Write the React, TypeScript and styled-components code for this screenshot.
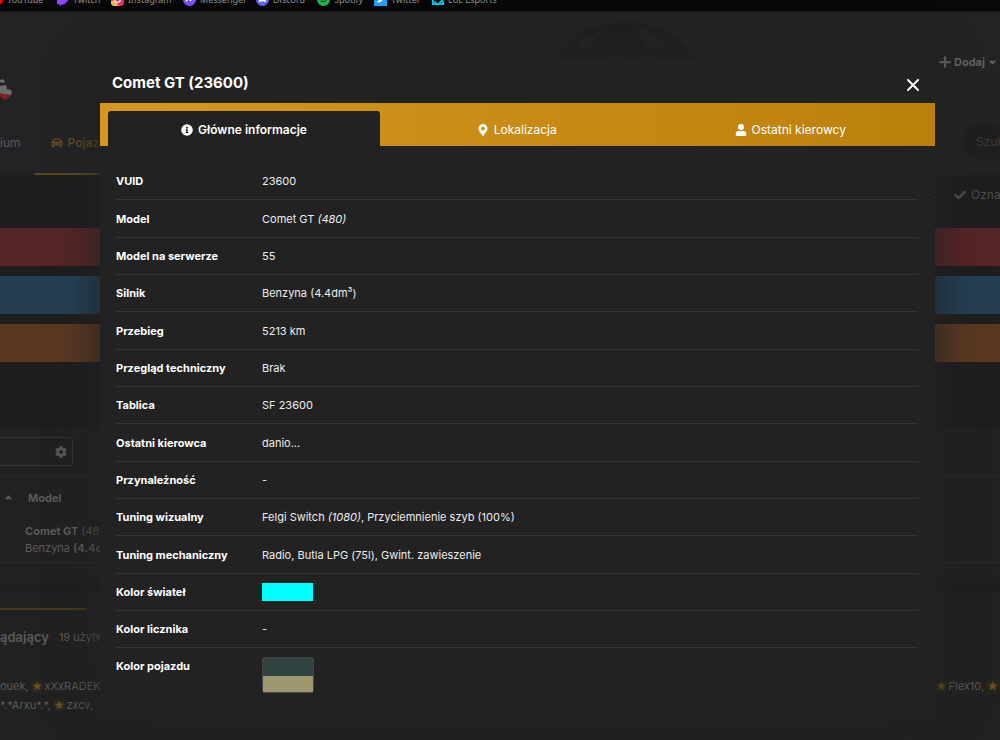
import React from 'react';
import styled, { createGlobalStyle } from 'styled-components';

const Global = createGlobalStyle`
  *, *::before, *::after { box-sizing: border-box; }
  html, body { margin: 0; padding: 0; }
  body {
    background: #212121;
    color: #5a5a5a;
    font-family: Inter, "Noto Sans", sans-serif;
    font-size: 12px;
    line-height: 18px;
  }
  button, input { font: inherit; color: inherit; }
  a { color: inherit; text-decoration: none; }
  svg { flex: none; }
`;

const Page = styled.div`
  position: relative;
  min-height: 100vh;
  overflow: hidden;
  white-space: nowrap;
`;

/* Bookmarks strip */

const Bookmarks = styled.nav`
  display: flex;
  align-items: flex-end;
  height: 12px;
  margin-left: -10px;
  overflow: hidden;
  background: #080808;
  border-bottom: 1px solid #161617;
  color: #8f8f8f;
  font: 9px/14px "Noto Sans", sans-serif;
`;

const Bookmark = styled.a<{ $width: number }>`
  display: flex;
  align-items: center;
  gap: 4px;
  flex: 0 0 ${p => p.$width}px;
  height: 23px;
`;

const BookmarkIcon = styled.svg`
  width: 13px;
  height: 13px;
`;

/* Page behind the dialog */

const Header = styled.header`
  position: relative;
  background: #232325;
`;

const HelmetArt = styled.svg`
  position: absolute;
  left: 550px;
  top: 8px;
  width: 150px;
  height: 44px;
`;

const Brand = styled.div`
  display: flex;
  justify-content: space-between;
  height: 100px;
  padding-top: 40px;
`;

const Logo = styled.svg`
  width: 14px;
  height: 24px;
  margin-top: 26px;
`;

const AddButton = styled.button`
  display: flex;
  align-items: center;
  align-self: flex-start;
  gap: 3px;
  height: 20px;
  padding: 0 3px 0 0;
  border: 0;
  background: none;
  color: #626262;
  font-size: 11px;
  font-weight: 700;
`;

const NavRow = styled.div`
  display: flex;
  justify-content: space-between;
  height: 63px;
`;

const NavLinks = styled.nav`
  display: flex;
  gap: 14px;
`;

const NavLink = styled.a<{ $active?: boolean }>`
  display: flex;
  align-items: center;
  gap: 5px;
  height: 63px;
  padding: ${p => (p.$active ? '0 16px' : '0')};
  border-bottom: 2px solid ${p => (p.$active ? '#5f4819' : 'transparent')};
  color: ${p => (p.$active ? '#5c4821' : '#5a5a5a')};
  font-weight: ${p => (p.$active ? 600 : 400)};
`;

const Search = styled.input`
  width: 37px;
  height: 35px;
  margin-top: 12px;
  padding: 0 0 0 13px;
  border: 0;
  border-radius: 18px 0 0 18px;
  background: #1f1f20;
  &::placeholder { color: #3a3a3b; opacity: 1; }
`;

const Actions = styled.div`
  display: flex;
  justify-content: flex-end;
  gap: 17px;
  height: 53px;
  padding-top: 10px;
  background: #1e1e1e;
  color: #4c4c4c;
`;

const ActionLink = styled.a`
  display: flex;
  align-items: center;
  gap: 5px;
  width: 46px;
  height: 20px;
  overflow: hidden;
`;

const Notices = styled.section`
  display: grid;
  gap: 10px;
  height: 201px;
  align-content: start;
  background: #1e1e1e;
`;

const Notice = styled.div<{ $color: string }>`
  height: 38px;
  background: ${p => p.$color};
`;

const Results = styled.section`
  border-bottom: 8px solid #1e1e1e;
`;

const FilterRow = styled.div`
  padding: 8px 0 10px;
`;

const Filter = styled.div`
  display: flex;
  align-items: center;
  width: 73px;
  height: 29px;
  padding-right: 5px;
  border: 1px solid #333;
  border-left: 0;
  border-radius: 0 3px 3px 0;
`;

const FilterInput = styled.input`
  min-width: 0;
  flex: 1;
  border: 0;
  background: none;
`;

const IconButton = styled.button`
  display: flex;
  padding: 0;
  border: 0;
  background: none;
  color: #595959;
`;

const ResultTable = styled.table`
  width: 100%;
  border-collapse: collapse;
  font-size: 11px;
  b { font-weight: 700; }
  th {
    height: 42px;
    padding: 0;
    border-top: 1px solid #2a2a2a;
    text-align: left;
    font-weight: 700;
  }
  td {
    height: 44px;
    padding: 0 0 0 25px;
    border-bottom: 1px solid #2a2a2a;
    line-height: 17px;
  }
`;

const SortLabel = styled.span`
  display: flex;
  align-items: center;
  gap: 15px;
  padding-left: 4px;
`;

const ResultSpacer = styled.div`
  height: 20px;
`;

const Viewers = styled.section`
  width: 100%;
  font-size: 11px;
`;

const ViewersHead = styled.h3`
  display: flex;
  align-items: center;
  gap: 10px;
  height: 57px;
  margin: 17px 0 12px;
  font-size: 13px;
  font-weight: 600;
  &::before {
    content: "";
    align-self: flex-start;
    width: 87px;
    height: 2px;
    margin-right: -97px;
    background: #4b3817;
  }
`;

const ViewerCount = styled.small`
  font-size: 11px;
  font-weight: 400;
`;

const ViewerLine = styled.div`
  display: flex;
  justify-content: space-between;
  height: 19px;
  line-height: 19px;
`;

const Star = styled.span`
  margin-right: 2px;
  color: #6c541a;
  font: 12px/19px "DejaVu Sans", sans-serif;
  text-shadow: 0 0 6px #6c541a;
`;

/* Dialog */

const Dialog = styled.section`
  position: absolute;
  top: 60px;
  left: 100px;
  right: 65px;
  padding-bottom: 22px;
  background: #222;
  box-shadow: 0 0 40px #222;
  color: #ededed;
`;

const DialogHead = styled.header`
  display: flex;
  align-items: center;
  justify-content: space-between;
  height: 43px;
  padding: 2px 14px 0 12px;
`;

const Title = styled.h2`
  margin: 0;
  color: #fff;
  font-size: 15px;
  line-height: 20px;
  font-weight: 700;
`;

const Close = styled.button`
  display: flex;
  padding: 4px 0 0;
  border: 0;
  background: none;
  color: #fff;
`;

const Tabs = styled.div`
  display: grid;
  grid-template-columns: 272px 1fr 1fr;
  height: 43px;
  padding: 8px 8px 0;
  background: linear-gradient(90deg, #d5971f, #bb800c);
`;

const Tab = styled.button<{ $active?: boolean }>`
  display: flex;
  align-items: center;
  justify-content: center;
  gap: 5px;
  padding: 2px 0 0;
  border: 0;
  border-radius: 3px 3px 0 0;
  background: ${p => (p.$active ? '#222' : 'none')};
  color: #fff;
  font-weight: ${p => (p.$active ? 600 : 400)};
`;

const Details = styled.table`
  width: calc(100% - 33px);
  height: 531px;
  margin: 17px 17px 0 16px;
  border-collapse: separate;
  border-spacing: 0;
  font-size: 11px;
  th, td {
    height: 37px;
    padding: 0;
    border-bottom: 1px solid #343434;
    text-align: left;
  }
  th {
    width: 146px;
    color: #fff;
    font-weight: 700;
  }
  tr:last-child th, tr:last-child td {
    padding-top: 9px;
    border-bottom: 0;
    vertical-align: top;
  }
`;

const Swatch = styled.div<{ $color: string }>`
  width: 51px;
  height: 18px;
  background: ${p => p.$color};
`;

const SwatchPair = styled.div`
  width: 52px;
  height: 36px;
  overflow: hidden;
  border: 1px solid #444;
  border-radius: 2px;
`;

const rows: [string, React.ReactNode][] = [
  ['VUID', '23600'],
  ['Model', <>Comet GT <i>(480)</i></>],
  ['Model na serwerze', '55'],
  ['Silnik', 'Benzyna (4.4dm³)'],
  ['Przebieg', '5213 km'],
  ['Przegląd techniczny', 'Brak'],
  ['Tablica', 'SF 23600'],
  ['Ostatni kierowca', 'danio...'],
  ['Przynależność', '-'],
  ['Tuning wizualny', <>Felgi Switch <i>(1080)</i>, Przyciemnienie szyb (100%)</>],
  ['Tuning mechaniczny', 'Radio, Butla LPG (75l), Gwint. zawieszenie'],
  ['Kolor świateł', <Swatch $color="#00ffff" />],
  ['Kolor licznika', '-'],
  ['Kolor pojazdu', <SwatchPair><Swatch $color="#304340" /><Swatch $color="#9d986f" /></SwatchPair>],
];

const Glyph = ({ d, box = '0 0 512 512', size = 12 }: { d: string; box?: string; size?: number }) => (
  <svg width={size} height={size} viewBox={box} fill="currentColor" aria-hidden="true"><path d={d} /></svg>
);

const INFO = 'M256 8a248 248 0 1 0 0 496 248 248 0 0 0 0-496zm0 110a42 42 0 1 1 0 84 42 42 0 0 1 0-84zm56 254c0 7-5 12-12 12h-88c-7 0-12-5-12-12v-24c0-7 5-12 12-12h12v-64h-12c-7 0-12-5-12-12v-24c0-7 5-12 12-12h64c7 0 12 5 12 12v100h12c7 0 12 5 12 12v24z';
const PIN = 'M236 502C91 291 64 269 64 192a192 192 0 0 1 384 0c0 77-27 99-172 310-10 13-30 13-40 0zm20-230a80 80 0 1 0 0-160 80 80 0 0 0 0 160z';
const USER = 'M256 256a128 128 0 1 0 0-256 128 128 0 0 0 0 256zm90 32h-17a174 174 0 0 1-146 0h-17C92 288 32 348 32 422v42c0 26 22 48 48 48h352c26 0 48-22 48-48v-42c0-74-60-134-134-134z';
const CHECK = 'M174 439 7 273c-9-10-9-26 0-36l37-36c10-10 26-10 36 0l112 112L432 73c10-10 26-10 36 0l37 36c9 10 9 26 0 36L210 439c-10 10-26 10-36 0z';
const PLUS = 'M472 208H304V40c0-18-14-32-32-32h-32c-18 0-32 14-32 32v168H40c-18 0-32 14-32 32v32c0 18 14 32 32 32h168v168c0 18 14 32 32 32h32c18 0 32-14 32-32V304h168c18 0 32-14 32-32v-32c0-18-14-32-32-32z';
const CAR = 'M500 168h-56l-22-55a112 112 0 0 0-104-71H194a112 112 0 0 0-104 71l-22 55H12c-8 0-14 7-12 15l6 24c1 5 6 9 12 9h20a63 63 0 0 0-22 48v48c0 16 6 31 16 42v56c0 18 14 32 32 32h32c18 0 32-14 32-32v-32h256v32c0 18 14 32 32 32h32c18 0 32-14 32-32v-56c10-11 16-26 16-42v-48c0-19-9-37-22-48h20c6 0 11-4 12-9l6-24c2-8-4-15-12-15zm-350-31c7-18 25-31 44-31h124c19 0 37 13 44 31l22 55H128l22-55zM112 328c-19 0-32-13-32-32s13-32 32-32 48 29 48 48-29 16-48 16zm288 0c-19 0-48 3-48-16s29-48 48-48 32 13 32 32-13 32-32 32z';
const GEAR = 'M487 316l-42-25a192 192 0 0 0 0-70l42-25c5-3 7-9 6-14a248 248 0 0 0-55-95c-4-4-10-5-15-2l-43 24a190 190 0 0 0-60-35V25c0-5-4-10-10-12a250 250 0 0 0-109 0c-6 2-10 7-10 12v49a195 195 0 0 0-60 35L88 85c-5-3-11-2-15 2a246 246 0 0 0-55 95c-1 5 1 11 6 14l43 25a192 192 0 0 0 0 70l-43 25c-5 3-7 9-6 14 11 36 30 68 55 95 4 4 10 5 15 2l43-24a190 190 0 0 0 60 35v49c0 5 4 10 10 12 36 8 74 8 109 0 6-2 10-7 10-12v-49a195 195 0 0 0 60-35l43 24c5 3 11 2 15-2 25-27 44-59 55-95 1-5-1-11-6-14zM256 336a80 80 0 1 1 0-160 80 80 0 0 1 0 160z';
const CARET_DOWN = 'M32 150h448L256 374z';
const CARET_UP = 'M32 352h448L256 128z';

const bookmarks: { name: string; width: number; icon: React.ReactNode }[] = [
  { name: 'YouTube', width: 66, icon: <path d="M0 2h10q4 0 4 5t-4 5H0z" fill="#f00" /> },
  { name: 'Twitch', width: 55, icon: <path d="M1 0h12v8l-4 4H7l-3 2v-2H1z" fill="#9146ff" /> },
  { name: 'Instagram', width: 72, icon: <><rect width="14" height="14" rx="4" fill="#e1306c" /><path d="M0 9q4-3 8 5H4q-4 0-4-4z" fill="#fdb549" /><circle cx="7" cy="7" r="3" fill="none" stroke="#fff" strokeWidth="1.3" /></> },
  { name: 'Messenger', width: 73, icon: <><circle cx="7" cy="7" r="7" fill="#7a4dff" /><path d="m3 9 3-3 2 2 3-3" stroke="#fff" strokeWidth="1.4" fill="none" /></> },
  { name: 'Discord', width: 61, icon: <><circle cx="7" cy="7" r="7" fill="#5865f2" /><path d="M4 4q3-1 6 0l1 5-2 1-1-1H6l-1 1-2-1z" fill="#fff" /></> },
  { name: 'Spotify', width: 57, icon: <><circle cx="7" cy="7" r="7" fill="#1db954" /><path d="M3 5q4-1 8 1M4 7q3-1 6 1M4 9q3-1 5 1" stroke="#111" fill="none" /></> },
  { name: 'Twitter', width: 57, icon: <><path d="M0 0h14v14H0z" fill="#1da1f2" /><path d="M3 10q4 1 6-2l2-4-2-1-2 2-4-2q0 4 2 5z" fill="#fff" /></> },
  { name: 'LoL Esports', width: 80, icon: <path d="M5 2H2v10h4l-2-3M9 3h3v5L8 12h5V9" stroke="#0ce" strokeWidth="2" fill="none" /> },
];

export default function App() {
  return (
    <Page>
      <Global />
      <Bookmarks aria-label="Zakładki">
        {bookmarks.map(b => (
          <Bookmark key={b.name} href="#" $width={b.width}>
            <BookmarkIcon viewBox="0 0 14 14" aria-hidden="true">{b.icon}</BookmarkIcon>
            {b.name}
          </Bookmark>
        ))}
      </Bookmarks>

      <Header>
        <HelmetArt viewBox="0 0 150 44" aria-hidden="true">
          <path d="M4 40Q22 12 48 6q32-8 56 0 28 10 40 34h-36l-8-6q-24 10-34 0l-8 6z" fill="#1f1f21" />
          <path d="m20 32 12-12 20-10-12 18zM86 9q24 2 34 23L96 26z" fill="#232325" />
        </HelmetArt>
        <Brand>
          <Logo viewBox="0 0 14 24" aria-hidden="true">
            <path d="M0 2q4-2 5 2l-2 1-3-1zM0 8l6-1 1 4 4 1q2 3-1 6l-10-1z" fill="#6c6c6c" />
            <path d="M0 15l4 1 7 1q-2 3-5 5-4-1-6-4z" fill="#7a2229" />
          </Logo>
          <AddButton><Glyph d={PLUS} />Dodaj<Glyph d={CARET_DOWN} size={9} /></AddButton>
        </Brand>
        <NavRow>
          <NavLinks>
            <NavLink href="#">ium</NavLink>
            <NavLink href="#" $active><Glyph d={CAR} />Pojazdy</NavLink>
          </NavLinks>
          <Search aria-label="Szukaj" placeholder="Szukaj" />
        </NavRow>
      </Header>
      <Actions>
        <span>:</span>
        <ActionLink href="#"><Glyph d={CHECK} />Oznacz</ActionLink>
      </Actions>
      <Notices>
        <Notice $color="#562527" />
        <Notice $color="#243f54" />
        <Notice $color="#5a3822" />
      </Notices>

      <Results>
        <FilterRow>
          <Filter>
            <FilterInput aria-label="Filtr" />
            <IconButton aria-label="Ustawienia"><Glyph d={GEAR} /></IconButton>
          </Filter>
        </FilterRow>
        <ResultTable>
          <thead><tr><th><SortLabel><Glyph d={CARET_UP} size={9} />Model</SortLabel></th></tr></thead>
          <tbody><tr><td><b>Comet GT</b> (480)<br />Benzyna <b>(4.4dm³)</b></td></tr></tbody>
        </ResultTable>
        <ResultSpacer />
      </Results>

      <Viewers>
        <ViewersHead>ądający <ViewerCount>19 użytkowników</ViewerCount></ViewersHead>
        <ViewerLine>
          <span>ouek, <Star>★</Star>xXxRADEK</span>
          <span><Star>★</Star>Flex10, <Star>★</Star></span>
        </ViewerLine>
        <ViewerLine><span>*.*Arxu*.*, <Star>★</Star>zxcv,</span></ViewerLine>
      </Viewers>

      <Dialog role="dialog" aria-labelledby="vehicle-title">
        <DialogHead>
          <Title id="vehicle-title">Comet GT (23600)</Title>
          <Close aria-label="Zamknij">
            <svg width="16" height="16" viewBox="0 0 16 16" stroke="currentColor" strokeWidth="2" strokeLinecap="round"><path d="M3 3l10 10M13 3 3 13" /></svg>
          </Close>
        </DialogHead>
        <Tabs role="tablist">
          <Tab role="tab" aria-selected="true" $active><Glyph d={INFO} />Główne informacje</Tab>
          <Tab role="tab" aria-selected="false"><Glyph d={PIN} />Lokalizacja</Tab>
          <Tab role="tab" aria-selected="false"><Glyph d={USER} />Ostatni kierowcy</Tab>
        </Tabs>
        <Details>
          <tbody>
            {rows.map(([label, value]) => (
              <tr key={label}><th scope="row">{label}</th><td>{value}</td></tr>
            ))}
          </tbody>
        </Details>
      </Dialog>
    </Page>
  );
}
